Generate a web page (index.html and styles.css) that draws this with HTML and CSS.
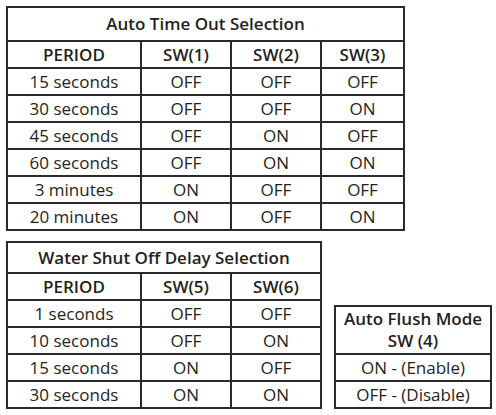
FILE: index.html
```html
<!DOCTYPE html>
<html>
<head>
<meta charset="utf-8">
<link rel="stylesheet" href="styles.css">
</head>
<body>
<div class="page">
  <table class="tbl t1">
    <colgroup><col class="c-period"><col class="c-sw"><col class="c-sw"><col class="c-sw3"></colgroup>
    <tr class="title"><th colspan="4">Auto Time Out Selection</th></tr>
    <tr class="head"><th>PERIOD</th><th>SW(1)</th><th>SW(2)</th><th>SW(3)</th></tr>
    <tr><td>15 seconds</td><td>OFF</td><td>OFF</td><td>OFF</td></tr>
    <tr><td>30 seconds</td><td>OFF</td><td>OFF</td><td>ON</td></tr>
    <tr><td>45 seconds</td><td>OFF</td><td>ON</td><td>OFF</td></tr>
    <tr><td>60 seconds</td><td>OFF</td><td>ON</td><td>ON</td></tr>
    <tr><td>3 minutes</td><td>ON</td><td>OFF</td><td>OFF</td></tr>
    <tr><td>20 minutes</td><td>ON</td><td>OFF</td><td>ON</td></tr>
  </table>
  <div class="bottom">
    <table class="tbl t2">
      <colgroup><col class="c-period"><col class="c-sw"><col class="c-sw"></colgroup>
      <tr class="title2"><th colspan="3">Water Shut Off Delay Selection</th></tr>
      <tr class="head"><th>PERIOD</th><th>SW(5)</th><th>SW(6)</th></tr>
      <tr><td>1 seconds</td><td>OFF</td><td>OFF</td></tr>
      <tr><td>10 seconds</td><td>OFF</td><td>ON</td></tr>
      <tr><td>15 seconds</td><td>ON</td><td>OFF</td></tr>
      <tr><td>30 seconds</td><td>ON</td><td>ON</td></tr>
    </table>
    <table class="tbl t3">
      <tr class="title3"><th>Auto Flush Mode<br>SW (4)</th></tr>
      <tr><td>ON - (Enable)</td></tr>
      <tr><td>OFF - (Disable)</td></tr>
    </table>
  </div>
</div>
</body>
</html>
```
FILE: styles.css
```css
html, body {
  margin: 0;
  padding: 0;
  background: #fff;
}
.page {
  padding: 6px 0 0 6px;
  font-family: "Open Sans", "Liberation Sans", sans-serif;
  color: #231f20;
}
.tbl {
  border-collapse: collapse;
  table-layout: fixed;
}
.tbl th, .tbl td {
  border: 2px solid #2a2a2a;
  padding: 0;
  text-align: center;
  font-size: 17px;
  line-height: 20px;
  height: 25px;
  white-space: nowrap;
}
.tbl th {
  font-weight: 600;
}
.t1 { width: 399px; }
.c-period { width: 134px; }
.c-sw { width: 90px; }
.c-sw3 { width: 83px; }
.title th { height: 32px; }
.title2 th { height: 29px; }
.t2 { width: 316px; }
.bottom {
  display: flex;
  align-items: flex-end;
  gap: 12px;
  margin-top: 10px;
}
.t3 { width: 158px; }
.title3 th { height: 46px; line-height: 22px; }
```
